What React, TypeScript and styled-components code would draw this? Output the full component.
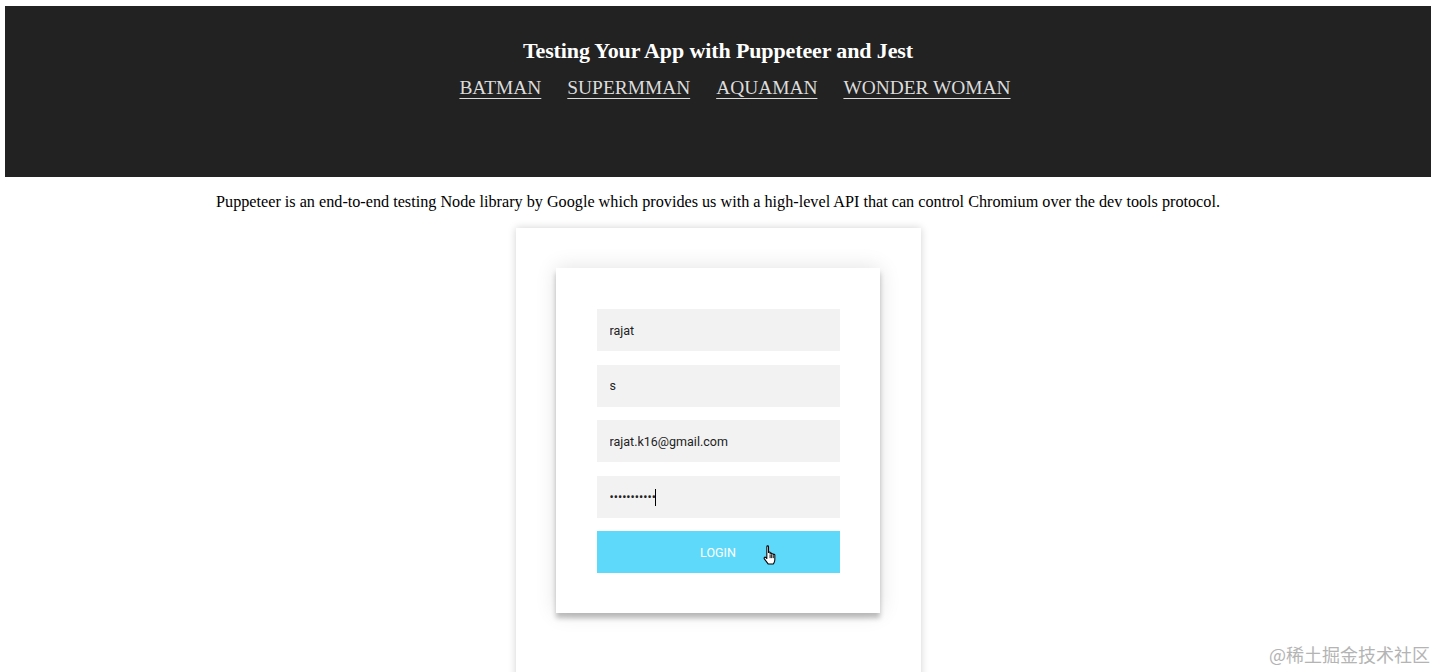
import styled, { createGlobalStyle } from 'styled-components';

const GlobalStyle = createGlobalStyle`
  html, body {
    margin: 0;
    padding: 0;
    background: #fff;
  }
  body {
    font-family: "Liberation Serif", "Times New Roman", serif;
  }
`

const Page = styled.div`
  position: relative;
  padding: 6px 5px 0;
  height: 672px;
  box-sizing: border-box;
  overflow: hidden;
`

const Header = styled.header`
  background: #222222;
  height: 171px;
  display: flex;
  flex-direction: column;
  align-items: center;
  padding-top: 32px;
  box-sizing: border-box;
`

const Title = styled.h1`
  margin: 0;
  color: #fff;
  font-size: 22px;
  font-weight: bold;
  line-height: 26px;
  letter-spacing: -0.12px;
`

const Nav = styled.nav`
  display: flex;
  gap: 26px;
  margin-top: 12px;
  padding-left: 34px;
`

const NavLink = styled.a`
  color: #dcdcdc;
  font-size: 19.4px;
  line-height: 23px;
  text-decoration: underline;
  text-decoration-thickness: 1px;
  text-underline-offset: 4px;
  cursor: pointer;
`

const Intro = styled.p`
  margin: 16px 0 17px;
  text-align: center;
  font-size: 16.2px;
  line-height: 18px;
  color: #000;
`

const OuterCard = styled.div`
  width: 405px;
  min-height: 480px;
  margin: 0 auto;
  padding: 40px;
  box-sizing: border-box;
  background: #fff;
  box-shadow: 0 0 8px 0 rgba(0, 0, 0, 0.18);
`

const Form = styled.form`
  width: 324px;
  padding: 41px 40px 40px 41px;
  box-sizing: border-box;
  background: #fff;
  display: flex;
  flex-direction: column;
  gap: 13.5px;
  box-shadow: 0 0 20px 0 rgba(0, 0, 0, 0.12), 0 5px 5px 0 rgba(0, 0, 0, 0.24);
`

const Field = styled.div`
  position: relative;
`

const Input = styled.input`
  display: block;
  height: 42px;
  width: 100%;
  box-sizing: border-box;
  border: 0;
  outline: 0;
  background: #f2f2f2;
  padding: 0 13px;
  font-family: Roboto, "Liberation Sans", sans-serif;
  font-size: 12.5px;
  color: #222;
  caret-color: transparent;
`

const Caret = styled.span`
  position: absolute;
  left: 58px;
  top: 13px;
  width: 1px;
  height: 17px;
  background: #000;
`

const Button = styled.button`
  position: relative;
  height: 42px;
  width: 100%;
  border: 0;
  background: #5fd9f9;
  color: #fff;
  font-family: Roboto, "Liberation Sans", sans-serif;
  font-size: 12.5px;
  text-transform: uppercase;
  cursor: pointer;
`

const Cursor = styled.svg`
  position: absolute;
  left: 164px;
  top: 14px;
`

const Watermark = styled.div`
  position: absolute;
  right: 6px;
  bottom: 5px;
  font-family: "Noto Sans CJK SC", sans-serif;
  font-size: 18px;
  color: #b4b4b4;
`

const HandCursor = () => (
  <Cursor width="18" height="21" viewBox="0 0 16 20">
    <path
      d="M5 1.6 C5 0.6 6.6 0.6 6.6 1.6 L6.6 7.2 C6.6 6.4 8.1 6.4 8.1 7.2 L8.1 8.2 C8.1 7.5 9.6 7.5 9.6 8.3 L9.6 8.8 C9.6 8.1 11.1 8.1 11.1 8.9 L11.1 9.4 C11.1 8.7 12.6 8.7 12.6 9.5 L12.6 14 C12.6 15.8 11.8 16.8 11.3 18 L6.2 18 C5.2 16.4 3.8 15 2.6 13.2 C1.9 12.1 3 11 4 11.9 L5 12.9 Z"
      fill="#fff"
      stroke="#000"
      strokeWidth="1"
      strokeLinejoin="round"
    />
    <path d="M8.1 9 L8.1 12.5 M9.6 9.4 L9.6 12.5 M11.1 9.8 L11.1 12.5" stroke="#000" strokeWidth="0.9" />
  </Cursor>
)

const links = ['BATMAN', 'SUPERMMAN', 'AQUAMAN', 'WONDER WOMAN']

function App() {
  return (
    <Page>
      <GlobalStyle />
      <Header>
        <Title>Testing Your App with Puppeteer and Jest</Title>
        <Nav>
          {links.map((link) => (
            <NavLink key={link}>{link}</NavLink>
          ))}
        </Nav>
      </Header>
      <Intro>
        Puppeteer is an end-to-end testing Node library by Google which provides us with a high-level API that can control Chromium over the dev tools protocol.
      </Intro>
      <OuterCard>
        <Form onSubmit={(e) => e.preventDefault()}>
          <Input type="text" defaultValue="rajat" />
          <Input type="text" defaultValue="s" />
          <Input type="text" defaultValue="rajat.k16@gmail.com" />
          <Field>
            <Input type="password" defaultValue="rajatkumar1" />
            <Caret />
          </Field>
          <Button type="submit">
            Login
            <HandCursor />
          </Button>
        </Form>
      </OuterCard>
      <Watermark>@稀土掘金技术社区</Watermark>
    </Page>
  )
}

export default App
